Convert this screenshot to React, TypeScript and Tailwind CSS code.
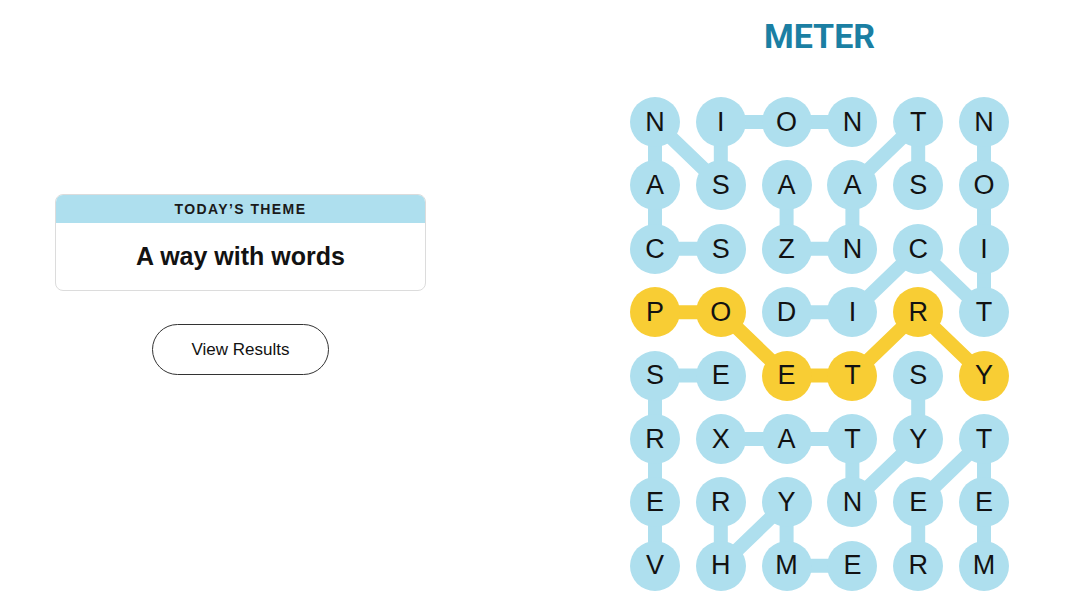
import React from "react";

const rows = [
  "NIONTN",
  "ASAASO",
  "CSZNCI",
  "PODIRT",
  "SEETSY",
  "RXATYT",
  "ERYNEE",
  "VHMERM",
];

// found words as paths of [row, col]
const words: { path: [number, number][]; spangram?: boolean }[] = [
  { path: [[2, 1], [2, 0], [1, 0], [0, 0], [1, 1], [0, 1], [0, 2], [0, 3]] },
  { path: [[1, 4], [0, 4], [1, 3], [2, 3], [2, 2], [1, 2]] },
  { path: [[3, 2], [3, 3], [2, 4], [3, 5], [2, 5], [1, 5], [0, 5]] },
  { path: [[3, 0], [3, 1], [4, 2], [4, 3], [3, 4], [4, 5]], spangram: true },
  { path: [[7, 0], [6, 0], [5, 0], [4, 0], [4, 1]] },
  { path: [[6, 1], [7, 1], [6, 2], [7, 2], [7, 3]] },
  { path: [[4, 4], [5, 4], [6, 3], [5, 3], [5, 2], [5, 1]] },
  { path: [[7, 5], [6, 5], [5, 5], [6, 4], [7, 4]] },
];

const COL = 65.8;
const ROW = 63.4;
const R = 25;

const spangramCells = new Set(
  words.filter((w) => w.spangram).flatMap((w) => w.path.map(([r, c]) => `${r}-${c}`))
);

const Board: React.FC = () => {
  return (
    <div className="relative w-[379px] h-[494px]">
      <svg className="absolute inset-0" width="379" height="494">
        {words.map((w, i) => (
          <polyline
            key={i}
            points={w.path.map(([r, c]) => `${R + c * COL},${R + r * ROW}`).join(" ")}
            fill="none"
            stroke={w.spangram ? "#f8cd34" : "#aedfee"}
            strokeWidth={14}
            strokeLinejoin="round"
          />
        ))}
      </svg>
      <div className="relative grid grid-cols-[repeat(6,50px)] gap-x-[15.8px] gap-y-[13.4px]">
        {rows.map((row, r) =>
          row.split("").map((ch, c) => (
            <div
              key={`${r}-${c}`}
              className={`w-[50px] h-[50px] rounded-full flex items-center justify-center text-[27px] text-[#121212] ${
                spangramCells.has(`${r}-${c}`) ? "bg-[#f8cd34]" : "bg-[#aedfee]"
              }`}
            >
              {ch}
            </div>
          ))
        )}
      </div>
    </div>
  );
};

export default function App() {
  return (
    <div className="w-[1080px] h-[608px] bg-white flex font-['Liberation_Sans',sans-serif] overflow-hidden">
      <div className="w-[630px] pl-[55px] pt-[194px]">
        <div className="w-[371px] flex flex-col items-center">
          <div className="w-full rounded-lg border border-[#dcdcdc] overflow-hidden">
            <div className="h-[28px] bg-[#aedfee] flex items-center justify-center text-[14px] font-bold tracking-[1.4px] text-[#1a1a1a]">
              TODAY’S THEME
            </div>
            <div className="h-[67px] flex items-center justify-center text-[25px] font-bold text-[#121212]">
              A way with words
            </div>
          </div>
          <button className="mt-[33px] w-[177px] h-[51px] rounded-full border border-[#333] text-[17px] text-[#121212] bg-white">
            View Results
          </button>
        </div>
      </div>
      <div className="flex flex-col items-center">
        <div className="mt-[14px] h-[44px] flex items-center font-['Roboto',sans-serif] font-bold text-[34px] text-[#1b7fa3]">
          METER
        </div>
        <div className="mt-[39px]">
          <Board />
        </div>
      </div>
    </div>
  );
}
